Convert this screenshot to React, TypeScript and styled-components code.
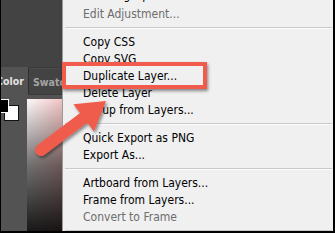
import React from 'react';
import styled, { createGlobalStyle } from 'styled-components';

const Global = createGlobalStyle`
  html, body { margin: 0; padding: 0; background: #fff; }
  body { width: 335px; height: 233px; overflow: hidden; }
`;

const Frame = styled.div`
  position: relative;
  width: 335px;
  height: 233px;
  box-sizing: border-box;
  border-left: 1px solid #000;
  border-right: 2px solid #000;
  border-bottom: 2px solid #000;
  display: flex;
  overflow: hidden;
  font-family: "DejaVu Sans Condensed", Tahoma, "DejaVu Sans", sans-serif;
`;

const Side = styled.div`
  width: 61px;
  flex: none;
  display: flex;
  flex-direction: column;
  background: #535353;
  overflow: hidden;
`;

const SideTop = styled.div`
  height: 67px;
  flex: none;
  background: #434343;
`;

const Tabs = styled.div`
  height: 28px;
  flex: none;
  display: flex;
  background: #3a3a3a;
`;

const Tab = styled.div<{ $active?: boolean }>`
  display: flex;
  align-items: center;
  overflow: hidden;
  white-space: nowrap;
  box-sizing: border-box;
  font-size: 10.5px;
  font-weight: bold;
  ${(p) =>
    p.$active
      ? `width: 27px; flex: none; background: #535353; color: #e4e4e4;`
      : `flex: 1; background: #434343; color: #a4a4a4; border-left: 1px solid #2e2e2e; border-top: 1px solid #4a4a4a; margin-top: 1px; margin-bottom: 1px;`}
`;

const TabLabel = styled.span<{ $shift: number }>`
  margin-left: ${(p) => p.$shift}px;
`;

const SideBody = styled.div`
  flex: 1;
  display: flex;
  padding-top: 4px;
`;

const SwatchWidget = styled.div`
  position: relative;
  width: 26px;
  height: 26px;
  flex: none;
`;

const ColorChip = styled.div<{ $fg?: boolean }>`
  position: absolute;
  box-sizing: border-box;
  ${(p) =>
    p.$fg
      ? `left: -5px; top: 0; width: 13px; height: 14px; background: #000; border: 1px solid #fff; z-index: 2;`
      : `left: 3px; top: 6px; width: 15px; height: 16px; background: #fff; border: 1px solid #111;`}
`;

const ColorField = styled.div`
  flex: 1;
  background:
    linear-gradient(to bottom, rgba(0, 0, 0, 0) 0%, rgba(0, 0, 0, 0.55) 50%, rgba(0, 0, 0, 0.9) 100%),
    linear-gradient(to right, #fdfafa, #f2c4c4);
`;

const Menu = styled.div`
  flex: 1;
  background: #f0f0f0;
  border-left: 1px solid #9a9a9a;
  overflow: hidden;
`;

const MenuList = styled.div`
  display: flex;
  flex-direction: column;
  margin-top: -11.5px;
`;

const Item = styled.div<{ $disabled?: boolean; $lift?: number }>`
  height: 17px;
  line-height: ${(p) => 17 - (p.$lift ?? 0) * 2}px;
  padding-left: 20px;
  font-size: 12px;
  white-space: nowrap;
  color: ${(p) => (p.$disabled ? '#6d6d6d' : '#000')};
`;

const Separator = styled.div`
  padding: 4px 1px 5px 2px;
  &::before {
    content: '';
    display: block;
    border-top: 1px solid #c9c9c9;
    border-bottom: 1px solid #fbfbfb;
  }
`;

const HighlightBox = styled.div`
  position: absolute;
  left: 61px;
  top: 62px;
  width: 145px;
  height: 27px;
  box-sizing: border-box;
  border: 4px solid #f05b4b;
  box-shadow: 1px 2px 3px rgba(0, 0, 0, 0.45);
  pointer-events: none;
`;

const ArrowLayer = styled.svg`
  position: absolute;
  left: -1px;
  top: 0;
  width: 335px;
  height: 233px;
  pointer-events: none;
`;

type Entry = { label: string; disabled?: boolean; lift?: number } | 'sep';

const entries: Entry[] = [
  { label: 'Blending Options...', lift: 2 },
  { label: 'Edit Adjustment...', disabled: true },
  'sep',
  { label: 'Copy CSS' },
  { label: 'Copy SVG' },
  { label: 'Duplicate Layer...' },
  { label: 'Delete Layer' },
  { label: 'Group from Layers...' },
  'sep',
  { label: 'Quick Export as PNG' },
  { label: 'Export As...' },
  'sep',
  { label: 'Artboard from Layers...' },
  { label: 'Frame from Layers...' },
  { label: 'Convert to Frame', disabled: true },
  'sep',
  { label: 'Convert to Smart Object' },
];

function Arrow() {
  const tip = [106, 101];
  const tail = [41, 150];
  const dx = tip[0] - tail[0];
  const dy = tip[1] - tail[1];
  const len = Math.hypot(dx, dy);
  const ux = dx / len;
  const uy = dy / len;
  const nx = -uy;
  const ny = ux;
  const headLen = 28;
  const half = 17;
  const bx = tip[0] - ux * headLen;
  const by = tip[1] - uy * headLen;
  const w1 = [bx + nx * half, by + ny * half];
  const w2 = [bx - nx * half, by - ny * half];
  const sx = bx + ux * 3;
  const sy = by + uy * 3;
  return (
    <ArrowLayer viewBox="0 0 335 233">
      <defs>
        <filter id="arrowShadow" x="-20%" y="-20%" width="150%" height="150%">
          <feDropShadow dx="1.5" dy="2" stdDeviation="1.6" floodColor="#000" floodOpacity="0.45" />
        </filter>
      </defs>
      <g filter="url(#arrowShadow)" fill="#f05b4b" stroke="none">
        <line x1={tail[0]} y1={tail[1]} x2={sx} y2={sy} stroke="#f05b4b" strokeWidth={12} strokeLinecap="round" />
        <polygon points={`${tip[0]},${tip[1]} ${w1[0]},${w1[1]} ${w2[0]},${w2[1]}`} />
      </g>
    </ArrowLayer>
  );
}

export default function App() {
  return (
    <>
      <Global />
      <Frame>
        <Side>
          <SideTop />
          <Tabs>
            <Tab $active>
              <TabLabel $shift={-5}>Color</TabLabel>
            </Tab>
            <Tab>
              <TabLabel $shift={4}>Swatches</TabLabel>
            </Tab>
          </Tabs>
          <SideBody>
            <SwatchWidget>
              <ColorChip $fg />
              <ColorChip />
            </SwatchWidget>
            <ColorField />
          </SideBody>
        </Side>
        <Menu>
          <MenuList>
            {entries.map((e, i) =>
              e === 'sep' ? (
                <Separator key={i} />
              ) : (
                <Item key={i} $disabled={e.disabled} $lift={e.lift}>
                  {e.label}
                </Item>
              )
            )}
          </MenuList>
        </Menu>
        <HighlightBox />
        <Arrow />
      </Frame>
    </>
  );
}
